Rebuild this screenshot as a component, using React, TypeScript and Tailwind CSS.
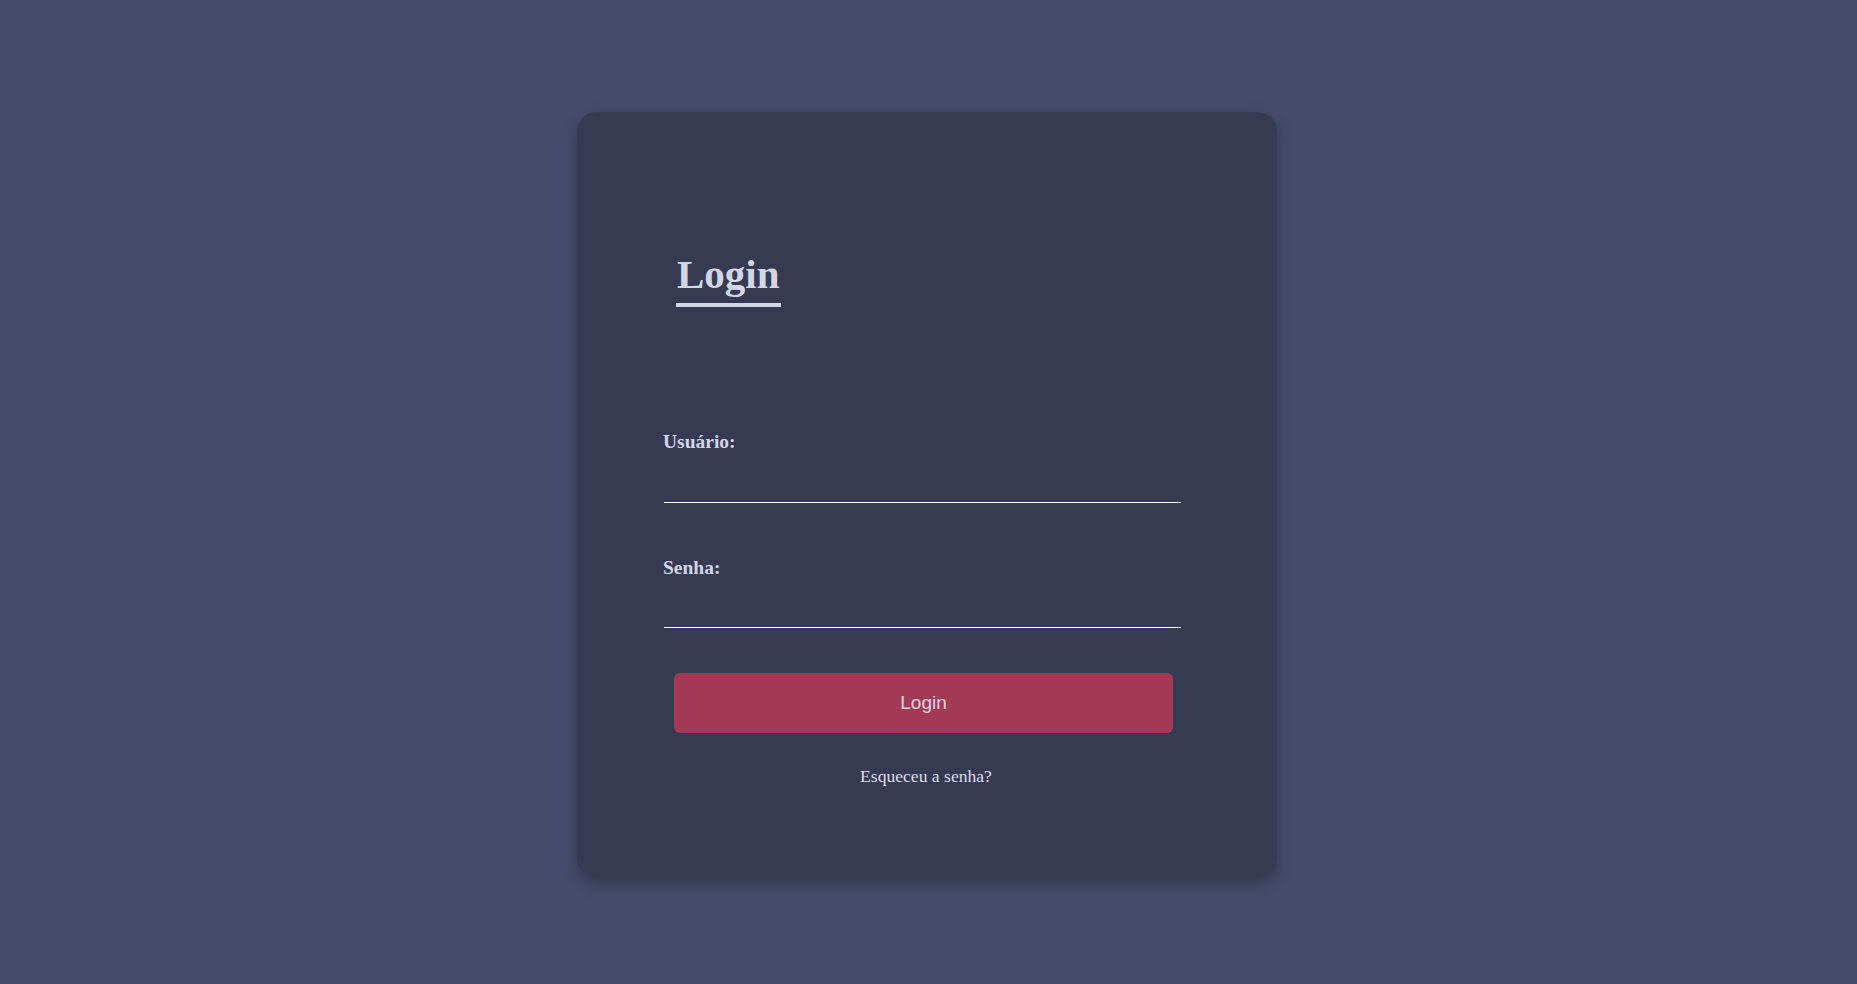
import React from "react";

export default function App() {
  return (
    <div className="min-h-screen w-full bg-[#464d6b] flex justify-center pt-[112px] pr-[3px]" style={{ minHeight: 984 }}>
      <div className="w-[700px] h-[765px] rounded-[20px] bg-[#363a52] shadow-[0_6px_16px_rgba(0,0,0,0.3)] flex flex-col font-['Liberation_Serif','Times_New_Roman',serif] text-[#d3d6e6]">
        <div className="mt-[140px] ml-[99px]">
          <h1 className="inline-block px-[1px] pb-[7px] border-b-4 border-[#d3d6e6] text-[41px] leading-[44px] font-bold">
            Login
          </h1>
        </div>

        <form className="flex flex-col mt-[123px]" onSubmit={(e) => e.preventDefault()}>
          <label className="ml-[86px] text-[19.5px] leading-[24px] font-bold">Usuário:</label>
          <input
            type="text"
            className="ml-[87px] mt-[19px] w-[517px] h-[30px] bg-transparent border-0 border-b border-white outline-none text-white text-[16px]"
          />
          <label className="ml-[86px] mt-[53px] text-[19.5px] leading-[24px] font-bold">Senha:</label>
          <input
            type="password"
            className="ml-[87px] mt-[18px] w-[517px] h-[30px] bg-transparent border-0 border-b border-white outline-none text-white text-[16px]"
          />
          <button
            type="submit"
            className="ml-[97px] mt-[45px] w-[499px] h-[60px] rounded-[6px] bg-[#a23a55] text-[#e2d3e0] text-[19px] font-['Liberation_Sans',Arial,sans-serif]"
          >
            Login
          </button>
        </form>

        <div className="mt-[33px] text-center pr-[2px] text-[17.6px] leading-[20px] text-[#dcdcec]">
          <a href="#">Esqueceu a senha?</a>
        </div>
      </div>
    </div>
  );
}
